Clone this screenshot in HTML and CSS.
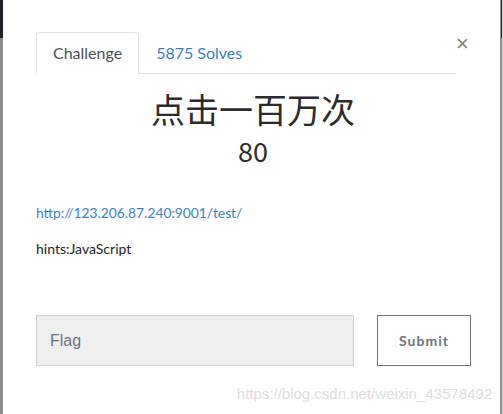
FILE: index.html
```html
<!DOCTYPE html>
<html>
<head>
<meta charset="utf-8">
<link rel="stylesheet" href="styles.css">
</head>
<body>
<div class="page">
  <div class="edge-left"></div>
  <div class="modal">
    <button class="close" type="button">&times;</button>
    <ul class="tabs">
      <li class="tab active">Challenge</li>
      <li class="tab link-tab">5875 Solves</li>
    </ul>
    <h3 class="name">点击一百万次</h3>
    <h4 class="value">80</h4>
    <div class="desc">
      <p class="url"><a href="#">http://123.206.87.240:9001/test/</a></p>
      <p class="hint">hints:JavaScript</p>
    </div>
    <div class="form">
      <div class="flag-input">Flag</div>
      <button class="submit" type="button">Submit</button>
    </div>
    <div class="watermark">https://blog.csdn.net/weixin_43578492</div>
  </div>
  <div class="edge-right"></div>
</div>
</body>
</html>
```

FILE: styles.css
```css
html, body {
  margin: 0;
  padding: 0;
  background: #fff;
}
.page {
  display: flex;
  width: 503px;
  height: 414px;
  overflow: hidden;
}
.edge-left {
  width: 3px;
  background: linear-gradient(#1e2226 0 38px, #8b8b8b 38px);
}
.edge-right {
  width: 3px;
  background: linear-gradient(to right, #9a9a9a 0 1px, transparent 1px),
              linear-gradient(#1e2226 0 38px, #8b8b8b 38px);
  background-size: 100% 100%, 1px 100%;
  background-position: 0 0, 1px 0;
  background-repeat: no-repeat;
  background-color: #d8d8d8;
}
.modal {
  flex: 1;
  position: relative;
  background: #fff;
  padding: 32px 0 0 33px;
  font-family: Lato, "Noto Sans", sans-serif;
  color: #212529;
}
.close {
  position: absolute;
  top: 33px;
  left: 453px;
  border: 0;
  background: none;
  padding: 0;
  font-family: "Liberation Sans", Arial, sans-serif;
  font-size: 22px;
  line-height: 22px;
  color: #808080;
}
.tabs {
  list-style: none;
  margin: 0;
  padding: 0;
  display: flex;
  width: 420px;
  border-bottom: 1px solid #dee2e6;
}
.tab {
  padding: 8px 16px;
  font-size: 16px;
  line-height: 24px;
  border: 1px solid transparent;
  border-top-left-radius: 4px;
  border-top-right-radius: 4px;
  margin-bottom: -1px;
}
.tab.active {
  color: #495057;
  border-color: #dee2e6 #dee2e6 #fff;
  background: #fff;
}
.link-tab {
  color: #3a7fc1;
}
.name {
  margin: 13px 0 0;
  text-align: center;
  width: 434px;
  font-family: "Noto Sans CJK SC", sans-serif;
  font-weight: 400;
  font-size: 34px;
  line-height: 44px;
  color: #2b2b2b;
}
.value {
  margin: 0;
  text-align: center;
  width: 434px;
  font-family: "Noto Sans CJK SC", sans-serif;
  font-weight: 400;
  font-size: 27px;
  line-height: 40px;
  color: #2b2b2b;
}
.desc {
  margin-top: 32px;
  font-size: 14px;
  line-height: 20px;
}
.desc p {
  margin: 0;
}
.url a {
  color: #3a7fc1;
  text-decoration: none;
  font-size: 13.8px;
}
.hint {
  margin-top: 16px !important;
  color: #212529;
}
.form {
  display: flex;
  gap: 23px;
  margin-top: 56px;
}
.flag-input {
  box-sizing: border-box;
  width: 318px;
  height: 51px;
  border: 1px solid #ced4da;
  background: #efefef;
  font-family: "Liberation Sans", Arial, sans-serif;
  font-size: 16px;
  line-height: 49px;
  padding-left: 13px;
  color: #6c757d;
}
.submit {
  width: 94px;
  height: 51px;
  border: 1px solid #6c757d;
  background: #fff;
  color: #6c757d;
  font-family: Lato, sans-serif;
  font-weight: 700;
  font-size: 14px;
  letter-spacing: 1px;
  padding: 0;
}
.watermark {
  margin-top: 19px;
  width: 456px;
  text-align: right;
  font-family: "Liberation Sans", Arial, sans-serif;
  font-size: 15px;
  line-height: 17px;
  color: #dedede;
}
```
